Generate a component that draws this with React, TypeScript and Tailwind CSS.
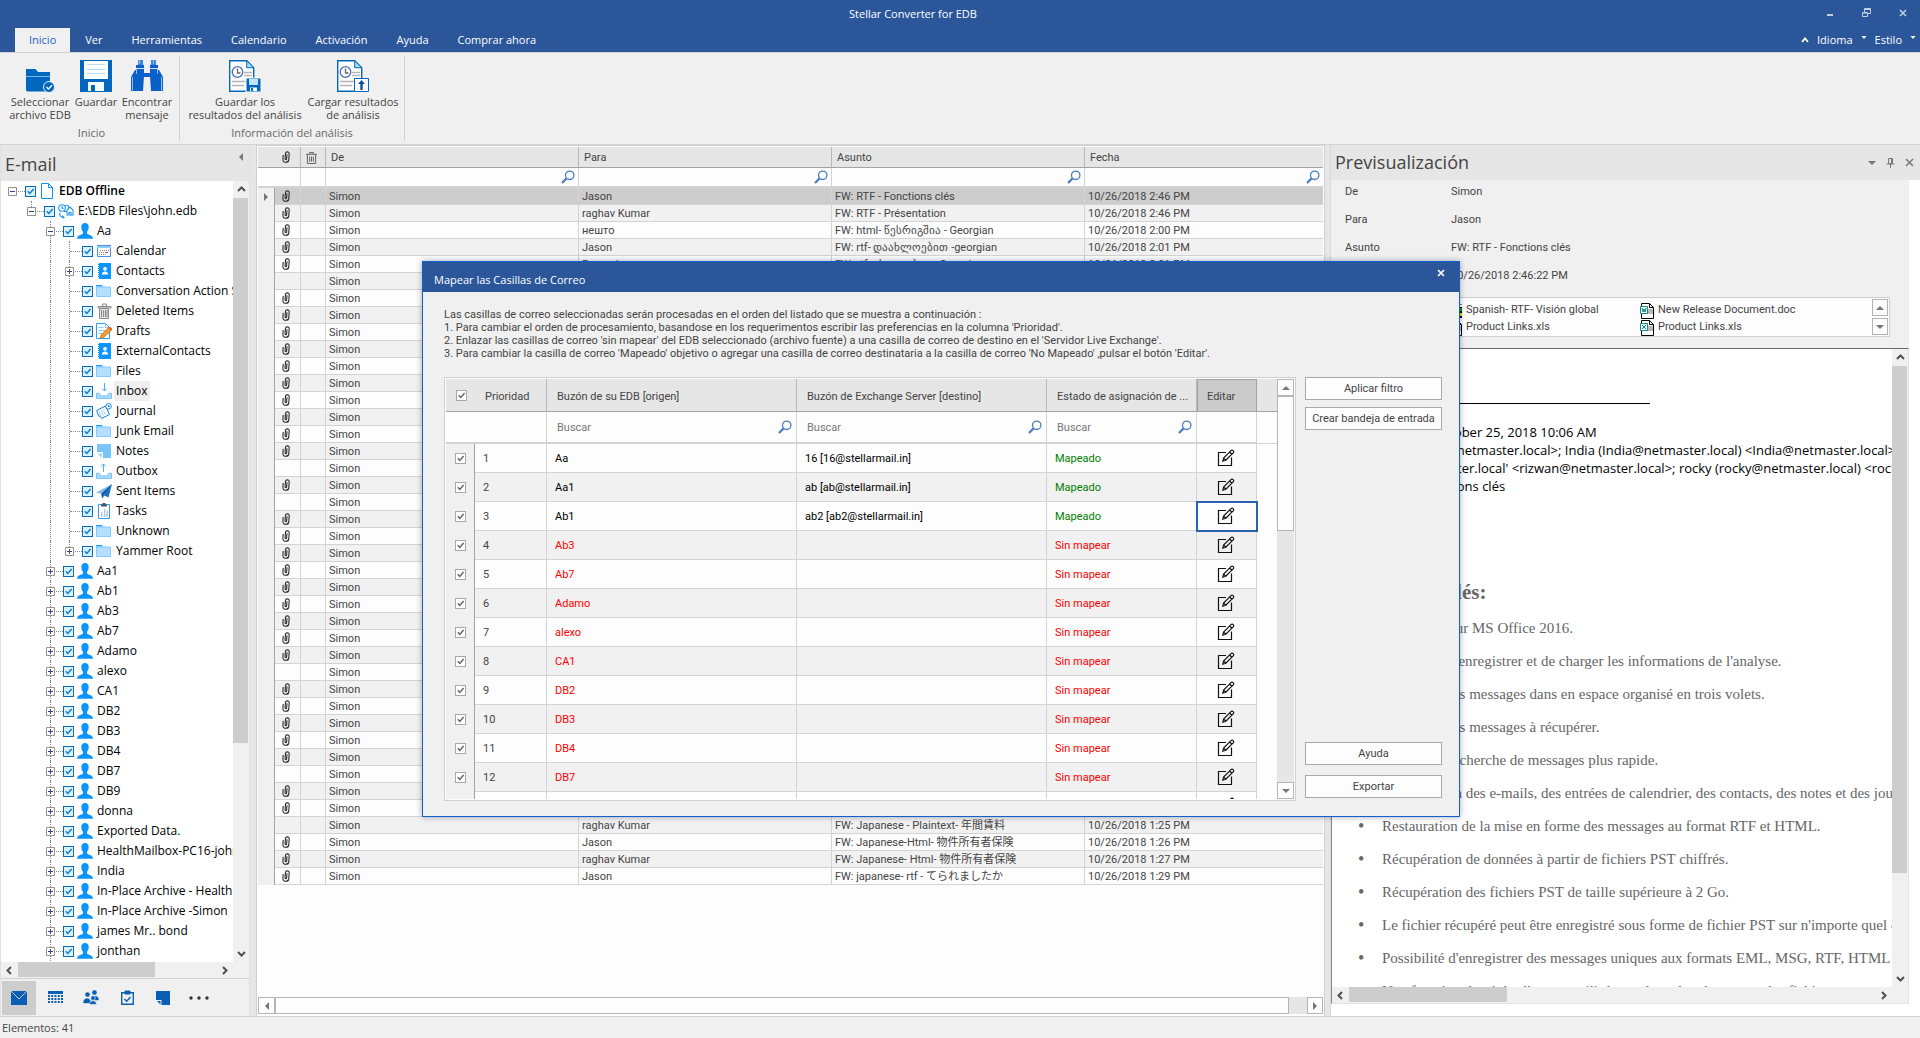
import type { ReactNode } from "react";
import { clsx } from "clsx";

const tabs = ["Inicio", "Ver", "Herramientas", "Calendario", "Activación", "Ayuda", "Comprar ahora"];

type Node = { level: number; label: string; icon: string; exp?: "+" | "-"; bold?: boolean; active?: boolean; last?: boolean };

const mailboxes = [
  "Aa1", "Ab1", "Ab3", "Ab7", "Adamo", "alexo", "CA1", "DB2", "DB3", "DB4", "DB7", "DB9", "donna",
  "Exported Data.", "HealthMailbox-PC16-john", "India", "In-Place Archive - HealthMailbox",
  "In-Place Archive -Simon", "james Mr.. bond", "jonthan",
];

const tree: Node[] = [
  { level: 0, label: "EDB Offline", icon: "file", exp: "-", bold: true },
  { level: 1, label: "E:\\EDB Files\\john.edb", icon: "edb", exp: "-" },
  { level: 2, label: "Aa", icon: "user", exp: "-" },
  { level: 3, label: "Calendar", icon: "calendar" },
  { level: 3, label: "Contacts", icon: "contacts", exp: "+" },
  { level: 3, label: "Conversation Action Settings", icon: "folder" },
  { level: 3, label: "Deleted Items", icon: "trash" },
  { level: 3, label: "Drafts", icon: "drafts" },
  { level: 3, label: "ExternalContacts", icon: "contacts" },
  { level: 3, label: "Files", icon: "folder" },
  { level: 3, label: "Inbox", icon: "inbox", active: true },
  { level: 3, label: "Journal", icon: "journal" },
  { level: 3, label: "Junk Email", icon: "folder" },
  { level: 3, label: "Notes", icon: "notes" },
  { level: 3, label: "Outbox", icon: "outbox" },
  { level: 3, label: "Sent Items", icon: "sent" },
  { level: 3, label: "Tasks", icon: "tasks" },
  { level: 3, label: "Unknown", icon: "folder" },
  { level: 3, label: "Yammer Root", icon: "folder", exp: "+", last: true },
  ...mailboxes.map((label): Node => ({ level: 2, label, icon: "user", exp: "+" })),
];

type Mail = { to?: string; subject?: string; date?: string; clip: boolean };

const noClip = [5, 16, 18, 28, 34, 37];
const known: Record<number, [string, string, string]> = {
  0: ["Jason", "FW: RTF - Fonctions clés", "10/26/2018 2:46 PM"],
  1: ["raghav Kumar", "FW: RTF - Présentation", "10/26/2018 2:46 PM"],
  2: ["нешто", "FW: html- წესრიგშია - Georgian", "10/26/2018 2:00 PM"],
  3: ["Jason", "FW: rtf- დაახლოებით -georgian", "10/26/2018 2:01 PM"],
  4: ["Ramesh", "FW: rtf- ახლოებით -Georgian", "10/26/2018 2:01 PM"],
  37: ["raghav Kumar", "FW: Japanese - Plaintext- 年間賃料", "10/26/2018 1:25 PM"],
  38: ["Jason", "FW: Japanese-Html- 物件所有者保険", "10/26/2018 1:26 PM"],
  39: ["raghav Kumar", "FW: Japanese- Html- 物件所有者保険", "10/26/2018 1:27 PM"],
  40: ["Jason", "FW: japanese- rtf - てられましたか", "10/26/2018 1:29 PM"],
};
const mails: Mail[] = Array.from({ length: 41 }, (_, i) => ({
  to: known[i]?.[0],
  subject: known[i]?.[1],
  date: known[i]?.[2],
  clip: !noClip.includes(i),
}));

const mapping = [
  ["Aa", "16 [16@stellarmail.in]"],
  ["Aa1", "ab [ab@stellarmail.in]"],
  ["Ab1", "ab2 [ab2@stellarmail.in]"],
  ["Ab3"], ["Ab7"], ["Adamo"], ["alexo"], ["CA1"], ["DB2"], ["DB3"], ["DB4"], ["DB7"], ["DB9"],
];

const features = [
  "Optimisé pour MS Office 2016.",
  "Possibilité d'enregistrer et de charger les informations de l'analyse.",
  "Affichage des messages dans en espace organisé en trois volets.",
  "Affichage des messages à récupérer.",
  "Moteur de recherche de messages plus rapide.",
  "Récupération des e-mails, des entrées de calendrier, des contacts, des notes et des journaux.",
  "Restauration de la mise en forme des messages au format RTF et HTML.",
  "Récupération de données à partir de fichiers PST chiffrés.",
  "Récupération des fichiers PST de taille supérieure à 2 Go.",
  "Le fichier récupéré peut être enregistré sous forme de fichier PST sur n'importe quel disque.",
  "Possibilité d'enregistrer des messages uniques aux formats EML, MSG, RTF, HTML et PDF.",
  "Une fonction de tri des l'aperçu utilisé pour la recherche et pour les fichiers.",
];

/* ---------- icons ---------- */

function Clip({ className }: { className?: string }) {
  return (
    <svg viewBox="0 0 8 12" className={clsx("h-3 w-2", className)} fill="none" stroke="#2c2c2c" strokeWidth="1.100">
      <path d="M5 3.200 4.600 8c-.1 1-1.600.9-1.500-.1L3.500 2.400C3.700.3 7.300.3 7.200 2.600L6.800 8.600C6.600 12.200.6 12.200.9 8.400L1.200 4" />
    </svg>
  );
}

function Bin({ className }: { className?: string }) {
  return (
    <svg viewBox="0 0 12 14" className={className} fill="none" stroke="currentColor">
      <path d="M0 3.500h12M4 3V1.500h4V3M1.500 4v9.500h9V4M4 6v5.500M6 6v5.500M8 6v5.500" />
    </svg>
  );
}

function Magnifier() {
  return (
    <svg viewBox="0 0 14 14" className="h-[14px] w-[14px] shrink-0" fill="none">
      <circle cx="8.700" cy="5.300" r="4.200" fill="#fff" stroke="#4a7fbf" strokeWidth="1.300" />
      <path d="M5.600 8.400 1 13" stroke="#4a7fbf" strokeWidth="2.200" />
    </svg>
  );
}

function EditIcon() {
  return (
    <svg viewBox="0 0 18 18" className="h-[18px] w-[18px]" fill="none" stroke="#111" strokeWidth="1.200">
      <path d="M9 3.500H1.500v13h13V8.500" />
      <path d="m5.800 12.200.8-3.200 7.600-7.600c1.300-1 3.200.8 2.200 2.200L8.800 11.200zM12.600 3l2.200 2.200M6.600 9l2.200 2.200" />
    </svg>
  );
}

const treeIcons: Record<string, ReactNode> = {
  file: <path d="M2.500.5h7l4 4v11h-11zM9.500.5v4h4" fill="#fff" stroke="#0f93f5" />,
  edb: (
    <g fill="#fff" stroke="#1c9af0" strokeWidth="1.100">
      <circle cx="4" cy="5" r="3.300" />
      <path d="M4 3v2.200h1.800M7 3.500c2-2.500 4.500-.5 3.500 1.500M9 12V7l3-3 3 3v5zM11 12V9.500h2V12M2 9.500c-1 3 1 5 4 4.800l-1.500-1.800M6 14.300l-1.500 1M6 8.500h3v3" />
    </g>
  ),
  user: (
    <path
      d="M8 0c2.500 0 3.800 1.700 3.700 4.100 0 2.200-.6 3.700-1.700 4.700v1.800c.4 1 2 1.200 3.500 1.700 1.500.6 2.300 1.500 2.500 3.500H0c.2-2 1-2.900 2.500-3.500 1.500-.5 3.100-.7 3.500-1.700V8.800C4.900 7.800 4.300 6.300 4.300 4.100 4.200 1.700 5.500 0 8 0z"
      fill="#0a95ff"
    />
  ),
  calendar: (
    <g>
      <path d="M1.500 2.500h13v11h-13z" fill="#fff" stroke="#4f8fe0" />
      <path d="M1 2h14v3H1z" fill="#8ecbff" />
      <path d="M1 2.500h14" stroke="#4f8fe0" />
      <path d="M4 7.500h9M3 9.500h10M3 11.500h8" stroke="#8a8a8a" strokeDasharray="1 1" />
      <path d="M10 9h2v1h-2z" fill="#e33" />
    </g>
  ),
  contacts: (
    <g>
      <path d="M3 0h12v16H3z" fill="#0a95ff" />
      <path d="M2.500 1v14" stroke="#0a95ff" strokeDasharray="1 1" />
      <circle cx="9" cy="5.800" r="1.900" fill="#fff" />
      <path d="M5.800 11.500c0-4 6.400-4 6.400 0z" fill="#fff" />
    </g>
  ),
  folder: (
    <g>
      <path d="M0 2h6l1 1.500H0z" fill="#169af5" />
      <path d="M.5 4h14v9.500H.5z" fill="#b3deff" stroke="#86c9fb" />
    </g>
  ),
  trash: (
    <g stroke="#8b8b8b" fill="#e3e3e3">
      <path d="M3.500 5.500h9v10h-9z" />
      <path d="M2 3.500h13v1.500H2zM6.500 3V1h4v2" fill="#f4f4f4" />
      <path d="M5.500 7v7M7.500 7v7M9.500 7v7M11 7v7" />
    </g>
  ),
  drafts: (
    <g>
      <path d="M.5.500h9l4 4v11H.5z" fill="#fff" stroke="#2a9df4" />
      <path d="M9.500.500v4h4M2.500 4.500h5M2.500 7.500h7M2.500 10.500h4" stroke="#8ccbff" fill="none" />
      <path d="m4 15.500 1-3.800L12.500 4.500l3 2.800-7.700 7.200z" fill="#f39a2e" stroke="#b86a12" strokeWidth=".6" />
      <path d="m12.500 4.500 1.200-1.100 2.800 2.800-1 1.100z" fill="#e0512f" />
    </g>
  ),
  inbox: (
    <g fill="none" stroke="#7cc3f5">
      <path d="M.5 10v5.500h15V10l-3 .5-1.500 2.500H5L3.500 10.500z" fill="#a9d9fb" />
      <path d="M8.500 0v8M6 5.500 8.500 8 11 5.500" stroke="#4aaef2" />
    </g>
  ),
  outbox: (
    <g fill="none" stroke="#7cc3f5">
      <path d="M.5 10v5.500h15V10l-3 .5-1.500 2.500H5L3.500 10.500z" fill="#a9d9fb" />
      <path d="M7.500 9V1M5 3.500 7.500 1 10 3.500" stroke="#4aaef2" />
    </g>
  ),
  journal: (
    <g fill="#fff" stroke="#1583e0">
      <path d="M.7 7.500 9.500 3l4 8.500-8 4-1.300-2.300L2.500 13z" />
      <path d="m3 8.500 2 5M5 7.500l2.200 5M7.200 6.500l2.200 5" stroke="#9fd2fa" />
      <circle cx="12.500" cy="3.300" r="2.800" />
      <path d="M12.500 2v1.500h1.300" />
    </g>
  ),
  notes: (
    <g>
      <path d="M1 1h14v14H7V9H1z" fill="#79c5fa" />
      <path d="M1 10.500h5V15z" fill="#a9d9fb" />
    </g>
  ),
  sent: (
    <g>
      <path d="M0 9.500 16 1 5.500 10.800z" fill="#7db8ec" />
      <path d="M16 1 5.500 10.800 6 15.500l2.500-3 4 2z" fill="#1f6fc0" />
      <path d="M16 1 7 11.500l-.8 4L5.500 10.800z" fill="#0f4c91" />
    </g>
  ),
  tasks: (
    <g>
      <path d="M2.500 1.500h11v14h-11z" fill="#fff" stroke="#2a9df4" />
      <path d="M5 14V9h1.500v5zM8 14V6h1.500v8zM10.500 14V8H12v6z" fill="#b8c9f0" />
      <path d="M5 3.500V1.500h1.500V0h3v1.500H11v2z" fill="#555" />
    </g>
  ),
};

function TreeIcon({ name }: { name: string }) {
  return (
    <svg viewBox="0 0 16 16" className="h-4 w-4 shrink-0" aria-hidden>
      {treeIcons[name]}
    </svg>
  );
}

const ribbonIcons: Record<string, ReactNode> = {
  folder: (
    <g>
      <path d="M2 9h9.500l2.500 3H26v17.500a2 2 0 0 1-2 2H4a2 2 0 0 1-2-2z" fill="#0067bf" />
      <path d="M2 16.500h24" stroke="#7ab6e6" />
      <circle cx="25" cy="27" r="5.500" fill="#0067bf" stroke="#f0f0f0" />
      <path d="m22.500 27 2 2 3.500-3.800" fill="none" stroke="#fff" strokeWidth="1.300" />
    </g>
  ),
  save: (
    <g>
      <path d="M0 0h32v32H0z" fill="#0067bf" />
      <path d="M4 1h24v18H4z" fill="#fff" />
      <path d="M7 4.500h18M7 9.500h18M7 13.500h18" stroke="#b8dcf5" />
      <path d="M8 22h16v9H8z" fill="#f4f9fd" />
      <path d="M11 25h4v6h-4z" fill="#0067bf" />
    </g>
  ),
  find: (
    <g>
      <path d="M7 0h5v5H7zM20 0h5v5h-5z" fill="#3d85dd" />
      <path d="M5 5h8v7H5zM19 5h8v7h-8zM12 13h8v4h-8z" fill="#0a5fc9" />
      <path d="M4 10h9v6l-1 15H0V17zM28 10h-9v6l1 15h12V17z" fill="#0a5fc9" />
      <path d="M1.500 17v13.500M30.500 17v13.500M8.500 0v4M22.500 0v4M5.500 9v5M26.500 9v5" stroke="#8fbdf0" />
      <path d="M5 8.500h8M19 8.500h8" stroke="#cfe2f8" />
    </g>
  ),
  report: (
    <g>
      <path d="M.7.700h17l7 7v23.600H.7z" fill="#fff" stroke="#0067bf" strokeWidth="1.400" />
      <path d="M17.700.700v7h7z" fill="#a9dcf5" stroke="#0067bf" />
      <path d="M15 12.500h8M15 15.500h8M3 21.500h18M3 25.500h12" stroke="#b5b5b5" strokeWidth="1.300" />
      <circle cx="8.500" cy="12" r="5.300" fill="#fff" stroke="#4b6fb5" strokeWidth="1.300" />
      <path d="M8.500 8.500V13h3" fill="none" stroke="#666" strokeWidth="1.300" />
    </g>
  ),
};

function RibbonIcon({ name }: { name: string }) {
  const report = name === "saveReport" || name === "loadReport";
  return (
    <svg viewBox="0 0 32 32" className="h-8 w-8" aria-hidden>
      {report ? ribbonIcons.report : ribbonIcons[name]}
      {name === "saveReport" && (
        <g>
          <path d="M17 18h15v14H17z" fill="#0067bf" stroke="#fff" />
          <path d="M20 19h9v6h-9z" fill="#bfe3f8" />
          <path d="M21 27.500h7V31h-7z" fill="#fff" />
          <path d="M22 28h2v3h-2z" fill="#0067bf" />
        </g>
      )}
      {name === "loadReport" && (
        <g>
          <path d="M17.500 18.500h14v13h-14z" fill="#fff" stroke="#0067bf" />
          <path d="m24.500 20 3.500 4h-2.300v6h-2.400v-6H21z" fill="#0a4f9c" />
        </g>
      )}
    </svg>
  );
}

function FileIcon({ mark }: { mark: string }) {
  return (
    <svg viewBox="0 0 14 16" className="h-4 w-[14px] shrink-0" aria-hidden>
      <path d="M1.500.500h8l4 4v11h-12z" fill="#fff" stroke="#000" />
      <path d="M9.500.500v4h4" fill="none" stroke="#000" />
      <path d="M7 6h6v5H7z" fill="#b9b9b9" />
      <path d="M.5 3.500h7v7h-7z" fill="#e8f5f3" stroke="#1b8a80" />
      {mark === "w" ? (
        <path d="m2 5 1 4 1-3 1 3 1-4" fill="none" stroke="#1b8a80" />
      ) : (
        <path d="m2 5 4 4M6 5 2 9" fill="none" stroke="#1b8a80" />
      )}
    </svg>
  );
}

// Windows-flag style icon for attachments without a known type
function FlagIcon() {
  return (
    <svg viewBox="0 0 14 16" className="h-4 w-[14px] shrink-0" aria-hidden>
      <path d="M0 1.500h14" stroke="#888" />
      <path d="M3 4h11v11H3z" fill="#000" />
      <path d="M5 6h3v3H5z" fill="#0020e0" />
      <path d="M12 5h2v3h-2z" fill="#00a000" />
      <path d="M9 6h3v3H9z" fill="#e00000" />
      <path d="M9 10h3v4H9z" fill="#0020e0" />
      <path d="M12 10h2v3h-2z" fill="#ffe000" />
    </svg>
  );
}

function Check({ label, tone }: { label: string; tone: "blue" | "gray" }) {
  return (
    <span className="relative block h-[11px] w-[11px] shrink-0">
      <input
        type="checkbox"
        defaultChecked
        aria-label={label}
        className={clsx(
          "peer block h-[11px] w-[11px] appearance-none border",
          tone === "blue" ? "border-[#0b6cb5] bg-[#d8f1fd]" : "border-[#a8a8a8] bg-white",
        )}
      />
      <svg viewBox="0 0 11 11" className="pointer-events-none absolute inset-0 hidden peer-checked:block">
        <path d="M2.800 5.200 4.800 7.400 8.600 3" fill="none" stroke={tone === "blue" ? "#0b7fd0" : "#666"} strokeWidth="1.500" />
      </svg>
    </span>
  );
}

/* ---------- scroll bars ---------- */

function Chevron({ dir }: { dir: "up" | "down" | "left" | "right" }) {
  const d = { up: "M1 6l3.500-3.500L8 6", down: "M1 3l3.500 3.500L8 3", left: "M6 1 2.500 4.500 6 8", right: "M3 1l3.500 3.500L3 8" }[dir];
  return (
    <svg viewBox="0 0 9 9" className="h-[9px] w-[9px]" fill="none" stroke="#505050" strokeWidth="2">
      <path d={d} />
    </svg>
  );
}

function Triangle({ dir }: { dir: "up" | "down" | "left" | "right" }) {
  const d = { up: "M0 6h8L4 2z", down: "M0 2h8L4 6z", left: "M6 0v8L2 4z", right: "M2 0v8l4-4z" }[dir];
  return (
    <svg viewBox="0 0 8 8" className="h-2 w-2" fill="#767676">
      <path d={d} />
    </svg>
  );
}

function ArrowButton({ dir, className }: { dir: "up" | "down" | "left" | "right"; className?: string }) {
  return (
    <button type="button" aria-label={dir} className={clsx("flex shrink-0 items-center justify-center border border-[#b4b4b4] bg-[#fdfdfd]", className)}>
      <Triangle dir={dir} />
    </button>
  );
}

function VBar({ thumb }: { thumb: string }) {
  return (
    <div className="flex w-4 shrink-0 flex-col bg-[#f0f0f0]">
      <button type="button" aria-label="up" className="flex h-[17px] items-center justify-center"><Chevron dir="up" /></button>
      <div className="min-h-0 flex-1">
        <div className={clsx("w-[15px] bg-[#cdcdcd]", thumb)} />
      </div>
      <button type="button" aria-label="down" className="flex h-[17px] items-center justify-center"><Chevron dir="down" /></button>
    </div>
  );
}

function HBar({ thumb }: { thumb: string }) {
  return (
    <div className="flex h-4 min-w-0 flex-1 bg-[#f0f0f0]">
      <button type="button" aria-label="left" className="flex w-[17px] items-center justify-center"><Chevron dir="left" /></button>
      <div className="flex-1">
        <div className={clsx("h-[15px] bg-[#cdcdcd]", thumb)} />
      </div>
      <button type="button" aria-label="right" className="flex w-[17px] items-center justify-center"><Chevron dir="right" /></button>
    </div>
  );
}

/* ---------- header ---------- */

function TitleBar() {
  return (
    <header className="bg-[#2b579a] text-[11px] text-white">
      <div className="flex h-7 items-center">
        <h1 className="flex-1 pr-[94px] text-center leading-6">Stellar Converter for EDB</h1>
        <div className="absolute top-2 right-[13px] flex items-center gap-7 text-[#c3cfe2]">
          <button type="button" aria-label="Minimizar">
            <svg viewBox="0 0 8 8" className="h-2 w-2"><path d="M1 6h6" stroke="currentColor" strokeWidth="2" /></svg>
          </button>
          <button type="button" aria-label="Restaurar">
            <svg viewBox="0 0 9 9" className="h-[9px] w-[9px]" fill="none" stroke="currentColor">
              <path d="M.5 4.500h5v4h-5zM2.500 4V.5h6v5H6M2.500 1.500h6M.5 5h5" />
            </svg>
          </button>
          <button type="button" aria-label="Cerrar">
            <svg viewBox="0 0 8 8" className="h-2 w-2"><path d="m1 1 6 6M7 1 1 7" stroke="currentColor" strokeWidth="1.500" /></svg>
          </button>
        </div>
      </div>
      <nav className="flex h-6 gap-px pl-[15px]">
        {tabs.map((t, i) => (
          <a
            key={t}
            href="#"
            className={clsx("flex items-center px-[14px]", i === 0 && "bg-[#f0f0f0] text-[#2160c4]")}
          >
            {t}
          </a>
        ))}
        <div className="ml-auto flex items-center gap-2 pr-1">
          <svg viewBox="0 0 8 6" className="h-[6px] w-2" fill="none" stroke="#fff" strokeWidth="1.800"><path d="m1 5 3-3.500L7 5" /></svg>
          <button type="button">Idioma</button>
          <svg viewBox="0 0 6 8" className="h-2 w-[6px]" fill="#fff"><path d="M.5 0h5L3 3z" /></svg>
          <button type="button">Estilo</button>
          <svg viewBox="0 0 6 8" className="h-2 w-[6px]" fill="#fff"><path d="M.5 0h5L3 3z" /></svg>
        </div>
      </nav>
    </header>
  );
}

function RibbonButton({ icon, lines, className }: { icon: string; lines: string[]; className: string }) {
  return (
    <button type="button" className={clsx("flex flex-col items-center text-[11px] leading-[13px] whitespace-nowrap text-[#444]", className)}>
      <RibbonIcon name={icon} />
      <span className="mt-[3px]">
        {lines.map((l) => <span key={l} className="block">{l}</span>)}
      </span>
    </button>
  );
}

function Ribbon() {
  return (
    <div className="flex h-[93px] border-y border-[#d5d5d5] bg-[#f0f0f0]">
      <section className="my-[3px] flex w-[180px] flex-col justify-between border-r border-[#d2d2d2] pt-1 pl-2">
        <div className="flex">
          <RibbonButton icon="folder" lines={["Seleccionar", "archivo EDB"]} className="w-16" />
          <RibbonButton icon="save" lines={["Guardar"]} className="w-12" />
          <RibbonButton icon="find" lines={["Encontrar", "mensaje"]} className="w-[54px]" />
        </div>
        <h2 className="pr-1 text-center text-[11px] leading-4 text-[#666]">Inicio</h2>
      </section>
      <section className="my-[3px] flex w-[225px] flex-col justify-between border-r border-[#d2d2d2] pt-1 pl-1">
        <div className="flex">
          <RibbonButton icon="saveReport" lines={["Guardar los", "resultados del análisis"]} className="w-[122px]" />
          <RibbonButton icon="loadReport" lines={["Cargar resultados", "de análisis"]} className="w-[94px]" />
        </div>
        <h2 className="pr-1 text-center text-[11px] leading-4 text-[#666]">Información del análisis</h2>
      </section>
    </div>
  );
}

/* ---------- mailbox tree ---------- */

function TreeRow({ node }: { node: Node }) {
  const { level } = node;
  return (
    <li className="flex h-5 items-center pl-[2px] whitespace-nowrap">
      {Array.from({ length: level }, (_, i) => (
        <span key={i} className="h-5 w-[19px] shrink-0 pl-[9px]">
          {i === 2 && <span className="block h-5 w-px border-l border-dotted border-[#8a8a8a]" />}
        </span>
      ))}
      <span className="relative flex h-5 w-[22px] shrink-0 items-center">
        {level > 0 && (
          <span
            className={clsx(
              "absolute top-0 left-[9px] border-l border-dotted border-[#8a8a8a]",
              level === 1 || node.last ? "h-[10px]" : "h-5",
            )}
          />
        )}
        <span className="ml-[10px] h-px flex-1 border-t border-dotted border-[#8a8a8a]" />
        {node.exp && (
          <button type="button" aria-label={`Expandir ${node.label}`} className="absolute left-[5px] h-[9px] w-[9px] bg-white">
            <svg viewBox="0 0 9 9" className="h-[9px] w-[9px]" fill="none">
              <path d="M.5.500h8v8h-8z" stroke="#919191" />
              <path d={node.exp === "+" ? "M2 4.500h5M4.500 2v5" : "M2 4.500h5"} stroke="#33468c" />
            </svg>
          </button>
        )}
      </span>
      <Check label={node.label} tone="blue" />
      <span className="ml-[3px] flex"><TreeIcon name={node.icon} /></span>
      <span className={clsx("ml-[2px] px-[2px] leading-5", node.bold && "font-semibold", node.active && "bg-[#efefef]")}>{node.label}</span>
    </li>
  );
}

function Sidebar() {
  return (
    <aside className="flex w-[250px] shrink-0 flex-col border-x border-[#e0e0e0]">
      <div className="flex h-9 shrink-0 justify-between pl-1">
        <h2 className="text-[18px] leading-[38px] text-[#444]">E-mail</h2>
        <button type="button" aria-label="Contraer" className="flex h-6 w-3 items-center"><Triangle dir="left" /></button>
      </div>
      <div className="flex min-h-0 flex-1">
        <ul className="min-w-0 flex-1 overflow-hidden bg-white text-[12px] text-black">
          {tree.map((n) => <TreeRow key={n.label} node={n} />)}
        </ul>
        <VBar thumb="h-[73%]" />
      </div>
      <div className="flex shrink-0"><HBar thumb="w-[69%]" /><div className="w-4 bg-[#f0f0f0]" /></div>
      <nav className="flex h-[38px] shrink-0 items-center gap-[2px] border-t border-[#cfcfcf] bg-[#f0f0f0] px-px text-[#0a5fb4]">
        <button type="button" aria-label="Correo" className="flex h-[34px] w-[34px] items-center justify-center bg-[#cdcdcd]">
          <svg viewBox="0 0 16 14" className="h-[14px] w-4"><path d="M0 0h16v14H0z" fill="currentColor" /><path d="m0 0 8 8 8-8" fill="none" stroke="#cdcdcd" /></svg>
        </button>
        <button type="button" aria-label="Calendario" className="flex h-[34px] w-[34px] items-center justify-center">
          <svg viewBox="0 0 15 13" className="h-[13px] w-[15px]" fill="none" stroke="currentColor"><path d="M0 1.500h15" strokeWidth="3" /><path d="M0 5h15M0 8h15M0 11h15" strokeWidth="2" strokeDasharray="2 1.250" /></svg>
        </button>
        <button type="button" aria-label="Contactos" className="flex h-[34px] w-[34px] items-center justify-center">
          <svg viewBox="0 0 16 15" className="h-[15px] w-4" fill="currentColor" stroke="#f0f0f0" strokeWidth=".6"><circle cx="11.500" cy="2.500" r="2.600" /><path d="M8 9.500c0-5 8-5 8 0v1H8z" /><circle cx="4.500" cy="4.500" r="2.600" /><path d="M0 12.500c0-6 8-6 8 0v1H0z" /><circle cx="10" cy="8" r="2.300" /><path d="M6.500 14.500c0-5 7-5 7 0z" /></svg>
        </button>
        <button type="button" aria-label="Tareas" className="flex h-[34px] w-[34px] items-center justify-center">
          <svg viewBox="0 0 13 15" className="h-[15px] w-[13px]" fill="none" stroke="currentColor"><path d="M.7 2.700h11.600v11.600H.7z" strokeWidth="1.400" /><path d="M4 1h5v3H4z" fill="currentColor" /><path d="m3.500 9 2.200 2.200L9.500 7" strokeWidth="1.500" /></svg>
        </button>
        <button type="button" aria-label="Notas" className="flex h-[34px] w-[34px] items-center justify-center">
          <svg viewBox="0 0 14 14" className="h-[14px] w-[14px]" fill="currentColor"><path d="M0 0h14v14H5.500V9H0zM1 10h3.500v3.500z" /></svg>
        </button>
        <button type="button" aria-label="Más" className="flex h-[34px] w-[34px] items-center justify-center">
          <svg viewBox="0 0 20 4" className="h-1 w-5" fill="#333"><circle cx="2" cy="2" r="1.700" /><circle cx="10" cy="2" r="1.700" /><circle cx="18" cy="2" r="1.700" /></svg>
        </button>
      </nav>
    </aside>
  );
}

/* ---------- message list ---------- */

const headCell = "border-r border-b border-r-[#b9b9b9] border-b-[#a3a3a3] bg-[#e6e6e6] text-left font-normal";
const lineCell = "border-r border-b border-[#d3d3d3]";

function MailList() {
  return (
    <main className="ml-[6px] flex min-w-0 flex-1 flex-col overflow-hidden border border-b-0 border-[#d0d0d0] bg-[#fdfdfd] p-px font-['Roboto','Noto_Sans','Noto_Sans_CJK_JP',sans-serif]">
      <div className="min-h-0 flex-1 overflow-hidden">
        <table className="w-full table-fixed border-separate border-spacing-0 text-[11px] leading-[15px] whitespace-nowrap text-[#444]">
          <colgroup>
            <col className="w-[17px]" />
            <col className="w-[26px]" />
            <col className="w-[25px]" />
            <col className="w-[253px]" />
            <col className="w-[253px]" />
            <col className="w-[253px]" />
            <col />
          </colgroup>
          <thead>
            <tr className="h-[21px]">
              <th className="border-b border-[#a3a3a3] bg-[#e6e6e6]" />
              <th className={clsx(headCell, "pr-1")}><Clip className="mx-auto" /></th>
              <th className={clsx(headCell, "pr-1")}><Bin className="mx-auto h-[13px] w-[11px] text-[#555]" /></th>
              <th className={clsx(headCell, "pt-px pl-[5px]")}>De</th>
              <th className={clsx(headCell, "pt-px pl-[5px]")}>Para</th>
              <th className={clsx(headCell, "pt-px pl-[5px]")}>Asunto</th>
              <th className={clsx(headCell, "border-r-0 pt-px pl-[5px]")}>Fecha</th>
            </tr>
            <tr className="h-5">
              <td className="border-b-2 border-[#d3d3d3]" />
              <td className="border-r border-b-2 border-[#d3d3d3]" />
              <td className="border-r border-b-2 border-[#d3d3d3]" />
              {["De", "Para", "Asunto", "Fecha"].map((c) => (
                <td key={c} className={clsx("border-b-2 border-[#d3d3d3] pr-[3px]", c !== "Fecha" && "border-r")}>
                  <div className="flex h-[18px] items-center">
                    <input aria-label={`Filtrar ${c}`} className="min-w-0 flex-1 bg-transparent px-1 outline-none" />
                    <Magnifier />
                  </div>
                </td>
              ))}
            </tr>
          </thead>
          <tbody>
            {mails.map((m, i) => (
              <tr key={i} className={clsx("h-[17px]", i === 0 ? "bg-[#cdcdcd]" : i % 2 ? "bg-[#f1f1f1]" : "bg-[#fdfdfd]")}>
                <td className="border-r border-[#a3a3a3] bg-[#f0f0f0]">
                  {i === 0 && <span className="flex justify-center"><Triangle dir="right" /></span>}
                </td>
                <td className={clsx(lineCell, "pr-1")}>{m.clip && <Clip className="mx-auto" />}</td>
                <td className={lineCell} />
                <td className={clsx(lineCell, "pt-px pl-[3px]")}>Simon</td>
                <td className={clsx(lineCell, "pt-px pl-[3px]")}>{m.to}</td>
                <td className={clsx(lineCell, "pt-px pl-[3px]")}>
                  {/* CJK and Georgian faces are taller than the row */}
                  <div className="h-[15px] overflow-hidden">{m.subject}</div>
                </td>
                <td className="border-b border-[#d3d3d3] pt-px pl-[3px]">{m.date}</td>
              </tr>
            ))}
          </tbody>
        </table>
      </div>
      <div className="mb-px flex h-[17px] shrink-0 bg-[#e6e6e6]">
        <ArrowButton dir="left" className="w-[17px]" />
        <div className="h-full flex-1 border border-[#b4b4b4] bg-[#fdfdfd]" />
        <div className="w-[18px]" />
        <ArrowButton dir="right" className="w-4" />
      </div>
    </main>
  );
}

/* ---------- preview ---------- */

function Attachment({ name, icon }: { name: string; icon: ReactNode }) {
  return (
    <li className="flex h-[17px] items-center gap-1">
      {icon}
      <a href="#">{name}</a>
    </li>
  );
}

function Preview() {
  const fields = [["De", "Simon"], ["Para", "Jason"], ["Asunto", "FW: RTF - Fonctions clés"], ["Fecha", "10/26/2018 2:46:22 PM"]];
  return (
    <section className="ml-[5px] flex w-[590px] shrink-0 flex-col border-l border-[#d8d8d8] bg-white">
      <div className="flex h-[35px] shrink-0 items-center bg-[#e6e6e6] pr-[6px] pl-1">
        <h2 className="flex-1 text-[18px] leading-[35px] text-[#444]">Previsualización</h2>
        <div className="flex items-center gap-[10px] text-[#777]">
          <Triangle dir="down" />
          <button type="button" aria-label="Fijar">
            <svg viewBox="0 0 9 10" className="h-[10px] w-[9px]" fill="none" stroke="currentColor"><path d="M2.500.500h4v5h-4zM5.500.500v5M.5 6h8M4.500 6v4" /></svg>
          </button>
          <button type="button" aria-label="Cerrar vista">
            <svg viewBox="0 0 9 9" className="h-[9px] w-[9px]"><path d="m1 1 7 7M8 1 1 8" stroke="currentColor" strokeWidth="1.500" /></svg>
          </button>
        </div>
      </div>
      <div className="mr-[11px] mb-3 flex min-h-0 flex-1 flex-col bg-[#f0f0f0] font-[Roboto,sans-serif] text-[11px] text-[#444]">
        <dl className="h-[117px] shrink-0 pt-1 pl-[14px]">
          {fields.map(([k, v]) => (
            <div key={k} className="flex h-7 leading-4">
              <dt className="w-[106px]">{k}</dt>
              <dd>{v}</dd>
            </div>
          ))}
        </dl>
        <div className="mr-[19px] ml-[115px] flex h-10 shrink-0 border border-[#cfcfcf] bg-[#fdfdfd]">
          <ul className="grid flex-1 grid-cols-[192px_1fr] content-center pt-1 pl-px">
            <Attachment name="Spanish- RTF- Visión global" icon={<FlagIcon />} />
            <Attachment name="New Release Document.doc" icon={<FileIcon mark="w" />} />
            <Attachment name="Product Links.xls" icon={<FileIcon mark="x" />} />
            <Attachment name="Product Links.xls" icon={<FileIcon mark="x" />} />
          </ul>
          <div className="flex w-[18px] flex-col justify-between p-px">
            <ArrowButton dir="up" className="h-[17px]" />
            <ArrowButton dir="down" className="h-[17px]" />
          </div>
        </div>
        <div className="mt-[11px] flex min-h-0 flex-1 flex-col border border-t-[#6a6a6a] border-r-[#e3e3e3] border-b-[#e3e3e3] border-l-[#8a8a8a] bg-white">
          <div className="flex min-h-0 flex-1">
            <article className="min-w-0 flex-1 overflow-hidden pl-1 whitespace-nowrap">
              <div className="h-[55px] w-[314px] border-b border-black" />
              <div className="pt-[19px] font-['Open_Sans',sans-serif] text-[13px] leading-[18px] text-black">
                <p>Sent: Thursday, October 25, 2018 10:06 AM</p>
                <p>To: Simon &lt;Simon@netmaster.local&gt;; India (India@netmaster.local) &lt;India@netmaster.local&gt;</p>
                <p>Cc: 'rizwan@netmaster.local' &lt;rizwan@netmaster.local&gt;; rocky (rocky@netmaster.local) &lt;rocky@netmaster.local&gt;</p>
                <p>Subject: RTF - Fonctions clés</p>
              </div>
              <div className="pt-[77px] font-['Liberation_Serif',serif] text-[15px] leading-[33px] text-[#666]">
                <h3 className="pl-[18px] text-[21px] leading-10 font-bold">Fonctions clés:</h3>
                <ul className="pl-[22px]">
                  {features.map((f) => (
                    <li key={f} className="flex before:w-6 before:shrink-0 before:text-[18px] before:content-['•']">{f}</li>
                  ))}
                </ul>
              </div>
            </article>
            <VBar thumb="h-[84%]" />
          </div>
          <div className="flex h-4 shrink-0"><HBar thumb="w-[30%]" /><div className="w-4 bg-[#f0f0f0]" /></div>
        </div>
      </div>
    </section>
  );
}

/* ---------- mapping dialog ---------- */

function PushButton({ children }: { children: ReactNode }) {
  return (
    <button type="button" className="h-[23px] w-full border border-[#a9a9a9] bg-[#fdfdfd] text-center leading-[21px] text-[#444]">
      {children}
    </button>
  );
}

function MappingTable() {
  return (
    <table className="w-full table-fixed border-separate border-spacing-0 leading-4 whitespace-nowrap text-[#444]">
      <colgroup>
        <col className="w-[29px]" />
        <col className="w-[72px]" />
        <col className="w-[250px]" />
        <col className="w-[250px]" />
        <col className="w-[150px]" />
        <col className="w-[60px]" />
        <col />
      </colgroup>
      <thead>
        <tr className="h-[33px]">
          <th className="border-b border-[#a3a3a3] bg-[#e6e6e6] pt-px pl-[10px]"><Check label="Seleccionar todo" tone="gray" /></th>
          <th className={clsx(headCell, "pt-1 pl-[10px]")}>Prioridad</th>
          <th className={clsx(headCell, "pt-1 pl-[10px]")}>Buzón de su EDB [origen]</th>
          <th className={clsx(headCell, "pt-1 pl-[10px]")}>Buzón de Exchange Server [destino]</th>
          <th className={clsx(headCell, "pt-1 pl-[10px]")}>Estado de asignación de ...</th>
          <th className="border border-[#a3a3a3] bg-[#cbcbcb] pt-[3px] pl-[9px] text-left font-normal">Editar</th>
          <th className="border-b border-[#a3a3a3] bg-[#e6e6e6]" />
        </tr>
        <tr className="h-8">
          <td className="border-b-2 border-[#d3d3d3]" />
          <td className="border-r border-b-2 border-[#d3d3d3]" />
          {["origen", "destino", "estado"].map((c) => (
            <td key={c} className="border-r border-b-2 border-[#d3d3d3] pr-1 pl-[10px]">
              <div className="flex items-center">
                <input aria-label={`Buscar ${c}`} placeholder="Buscar" className="h-5 min-w-0 flex-1 bg-transparent pt-px outline-none placeholder:text-[#777]" />
                <Magnifier />
              </div>
            </td>
          ))}
          <td className="border-r border-b-2 border-[#d3d3d3]" />
          <td className="border-b border-[#d3d3d3]" />
        </tr>
      </thead>
      <tbody>
        {mapping.map(([source, target], i) => (
          <tr key={source} className={clsx("h-[29px]", i % 2 ? "bg-[#f1f1f1]" : "bg-[#fdfdfd]")}>
            <td className="border-r border-[#a3a3a3] bg-[#f0f0f0] pl-[9px]"><Check label={source} tone="gray" /></td>
            <td className={clsx(lineCell, "pt-[2px] pl-2")}>{i + 1}</td>
            <td className={clsx(lineCell, "pt-[2px] pl-2", target ? "text-black" : "text-[#ff0000]")}>{source}</td>
            <td className={clsx(lineCell, "pt-[2px] pl-2 text-black")}>{target}</td>
            <td className={clsx(lineCell, "pt-[2px] pl-2", target ? "text-[#008000]" : "text-[#ff0000]")}>{target ? "Mapeado" : "Sin mapear"}</td>
            <td className={clsx(lineCell, "pr-px", i === 2 && "outline-2 -outline-offset-1 outline-[#2a60b0]")}>
              <button type="button" aria-label={`Editar ${source}`} className="mx-auto block"><EditIcon /></button>
            </td>
            <td className="bg-[#fdfdfd]" />
          </tr>
        ))}
      </tbody>
    </table>
  );
}

function MappingDialog() {
  return (
    <div
      role="dialog"
      aria-label="Mapear las Casillas de Correo"
      className="absolute top-[261px] left-[422px] flex h-[556px] w-[1038px] flex-col border border-[#0f63c4] bg-[#f0f0f0] shadow-[0_0_6px_rgba(0,0,60,0.35)]"
    >
      <div className="flex h-[30px] shrink-0 bg-[#2b579a] pr-[14px] pl-[11px] text-white">
        <h2 className="flex-1 pt-[7px] text-[11px] leading-[22px]">Mapear las Casillas de Correo</h2>
        <button type="button" aria-label="Cerrar" className="h-[22px]">
          <svg viewBox="0 0 8 8" className="h-2 w-2"><path d="m1 1 6 6M7 1 1 7" stroke="currentColor" strokeWidth="1.700" /></svg>
        </button>
      </div>
      <div className="flex min-h-0 flex-1 flex-col pt-4 pr-[17px] pb-[15px] pl-[21px] font-[Roboto,sans-serif] text-[11px] text-[#444]">
        <p className="leading-[13px]">Las casillas de correo seleccionadas serán procesadas en el orden del listado que se muestra a continuación :</p>
        <ol className="list-inside list-decimal leading-[13px]">
          <li>Para cambiar el orden de procesamiento, basandose en los requerimentos escribir las preferencias en la columna 'Prioridad'.</li>
          <li>Enlazar las casillas de correo 'sin mapear' del EDB seleccionado (archivo fuente) a una casilla de correo de destino en el 'Servidor Live Exchange'.</li>
          <li>Para cambiar la casilla de correo 'Mapeado' objetivo o agregar una casilla de correo destinataria a la casilla de correo 'No Mapeado' ,pulsar el botón 'Editar'.</li>
        </ol>
        <div className="mt-[17px] flex min-h-0 flex-1 gap-[9px]">
          <div className="flex w-[852px] shrink-0 border border-[#d0d0d0] bg-[#fdfdfd] p-px">
            <div className="min-w-0 flex-1 overflow-hidden"><MappingTable /></div>
            <div className="flex w-[17px] shrink-0 flex-col bg-[#e6e6e6]">
              <ArrowButton dir="up" className="h-[17px]" />
              <div className="h-[135px] border border-[#b4b4b4] bg-[#fdfdfd]" />
              <ArrowButton dir="down" className="mt-auto h-[17px]" />
            </div>
          </div>
          <div className="flex min-w-0 flex-1 flex-col gap-[7px] pb-[3px]">
            <PushButton>Aplicar filtro</PushButton>
            <PushButton>Crear bandeja de entrada</PushButton>
            <div className="mt-auto flex flex-col gap-[10px]">
              <PushButton>Ayuda</PushButton>
              <PushButton>Exportar</PushButton>
            </div>
          </div>
        </div>
      </div>
    </div>
  );
}

export default function App() {
  return (
    <div className="relative flex h-screen flex-col overflow-hidden bg-[#e6e6e6] font-['Open_Sans','Noto_Sans',sans-serif]">
      <TitleBar />
      <Ribbon />
      <div className="flex min-h-0 flex-1">
        <Sidebar />
        <MailList />
        <Preview />
      </div>
      <footer className="flex h-[22px] shrink-0 items-center border-t border-[#cfcfcf] bg-[#f0f0f0] pt-px pl-[2px] text-[11px] text-[#444]">
        Elementos: 41
      </footer>
      <MappingDialog />
    </div>
  );
}
